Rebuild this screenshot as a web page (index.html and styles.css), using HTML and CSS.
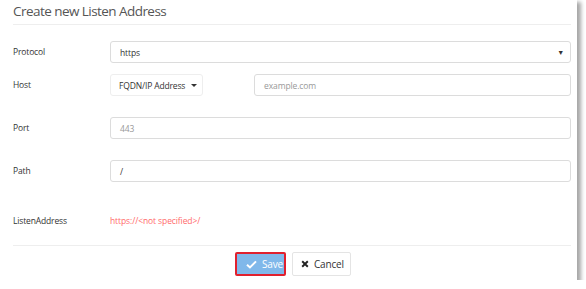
FILE: index.html
```html
<!DOCTYPE html>
<html>
<head>
<meta charset="utf-8">
<link rel="stylesheet" href="styles.css">
</head>
<body>
<div class="panel">
  <div class="title">Create new Listen Address</div>
  <div class="form">
    <div class="row r-protocol">
      <div class="label">Protocol</div>
      <div class="field select"><span class="val">https</span><span class="caret">&#9660;</span></div>
    </div>
    <div class="row r-host">
      <div class="label">Host</div>
      <div class="hostfields">
        <div class="dropbtn">FQDN/IP Address <span class="dcaret"></span></div>
        <div class="field host"><span class="ph">example.com</span></div>
      </div>
    </div>
    <div class="row r-port">
      <div class="label">Port</div>
      <div class="field"><span class="ph">443</span></div>
    </div>
    <div class="row r-path">
      <div class="label">Path</div>
      <div class="field"><span class="val">/</span></div>
    </div>
    <div class="row r-addr">
      <div class="label">ListenAddress</div>
      <div class="addr">https://&lt;not specified&gt;/</div>
    </div>
  </div>
  <div class="footer">
    <button class="btn save"><svg class="ico" viewBox="0 0 12 10" width="11" height="9"><path d="M1 5.2 L4.3 8.3 L11 1.5" fill="none" stroke="#fff" stroke-width="2.2"/></svg>Save</button>
    <button class="btn cancel"><svg class="ico" viewBox="0 0 10 10" width="8" height="8"><path d="M1.5 1.5 L8.5 8.5 M8.5 1.5 L1.5 8.5" stroke="#222" stroke-width="2.4"/></svg>Cancel</button>
  </div>
</div>
</body>
</html>
```

FILE: styles.css
```css
html, body {
  margin: 0;
  padding: 0;
  background: #fff;
}
body {
  font-family: "Open Sans", "Liberation Sans", sans-serif;
  color: #333;
}
.panel {
  width: 577px;
  height: 280px;
  box-sizing: border-box;
  padding: 0 6px 0 13px;
  background: #fff;
  box-shadow: 3px 3px 4px 1px rgba(0,0,0,0.35);
  display: flex;
  flex-direction: column;
}
.title {
  font-size: 13.5px;
  letter-spacing: -0.55px;
  color: #555;
  height: 25px;
  line-height: 22px;
  border-bottom: 1px solid #eee;
  box-sizing: border-box;
}
.form {
  display: flex;
  flex-direction: column;
}
.row {
  display: flex;
  align-items: center;
}
.label {
  width: 97px;
  font-size: 8.5px;
  letter-spacing: -0.15px;
  color: #333;
  flex: none;
  margin-top: -2px;
}
.field {
  flex: 1;
  height: 22px;
  box-sizing: border-box;
  border: 1px solid #dcdcdc;
  border-radius: 3px;
  display: flex;
  align-items: center;
  padding: 0 9px;
  font-size: 8.5px;
  letter-spacing: -0.1px;
}
.val { color: #333; }
.ph { color: #999; }
.select { justify-content: space-between; }
.caret { font-size: 7px; color: #333; margin-right: -3px; }
.r-protocol { margin-top: 16px; }
.r-host { margin-top: 11px; }
.r-port { margin-top: 21px; }
.r-path { margin-top: 21px; }
.r-addr { margin-top: 35px; }
.hostfields {
  flex: 1;
  display: flex;
  gap: 51px;
}
.dropbtn {
  width: 93px;
  height: 22px;
  flex: none;
  box-sizing: border-box;
  border: 1px solid #eee;
  border-radius: 3px;
  font-size: 8.5px;
  letter-spacing: -0.15px;
  white-space: nowrap;
  color: #333;
  display: flex;
  align-items: center;
  padding-left: 8px;
}
.dcaret {
  display: inline-block;
  width: 0; height: 0;
  border-left: 3px solid transparent;
  border-right: 3px solid transparent;
  border-top: 3px solid #333;
  margin-left: 6px;
}
.addr {
  font-size: 8.5px;
  letter-spacing: -0.1px;
  color: #ff6b6b;
  margin-top: -2px;
}
.footer {
  margin-top: 19px;
  border-top: 1px solid #eee;
  display: flex;
  justify-content: center;
  gap: 6px;
  padding-top: 6px;
  padding-left: 2px;
}
.btn {
  height: 24px;
  box-sizing: border-box;
  font-family: "Open Sans", "Liberation Sans", sans-serif;
  font-size: 10px;
  letter-spacing: -0.2px;
  display: flex;
  align-items: center;
  gap: 5px;
  border-radius: 2px;
  cursor: pointer;
}
.save {
  width: 51px;
  background: #80b8ea;
  color: #fff;
  border: 2px solid #e0202e;
  padding: 0 0 0 9px;
}
.cancel {
  width: 59px;
  background: #fff;
  color: #333;
  border: 1px solid #e4e4e4;
  padding: 0 0 0 8px;
}
```
